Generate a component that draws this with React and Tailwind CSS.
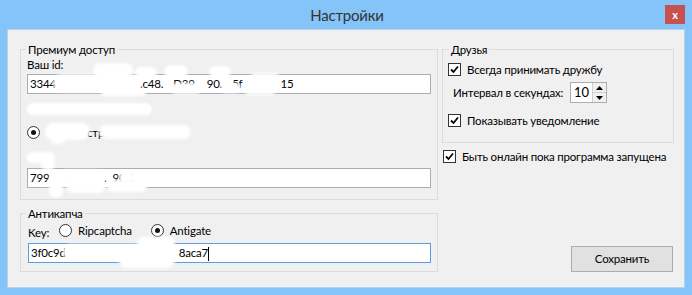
import React from 'react';

const FONT = "font-['Lato',sans-serif]";

// white smudges used to hide private values in the screenshot
const Blob = ({ className }) => (
  <span className={`absolute bg-white rounded-full blur-[1.5px] ${className}`} />
);

const Gap = ({ w }) => <span className="inline-block" style={{ width: w }} />;

const Check = ({ label }) => (
  <div className="flex items-center h-[15px] whitespace-nowrap">
    <span className="w-[13px] h-[13px] border border-[#333] bg-white flex items-center justify-center">
      <svg width="9" height="9" viewBox="0 0 9 9">
        <path d="M1 4.5 L3.5 7 L8 1.5" fill="none" stroke="#000" strokeWidth="1.8" />
      </svg>
    </span>
    <span className="ml-[6px] leading-[15px]">{label}</span>
  </div>
);

const Radio = ({ checked }) => (
  <span className="w-[13px] h-[13px] rounded-full border border-[#333] bg-white flex items-center justify-center">
    {checked && <span className="w-[5px] h-[5px] rounded-full bg-[#111]" />}
  </span>
);

const Group = ({ title, className, legendClass, children }) => (
  <div className={`relative border border-[#dcdcdc] ${className}`}>
    <span className={`absolute -top-[8px] px-[2px] bg-[#f0f0f0] leading-[15px] ${legendClass}`}>
      {title}
    </span>
    {children}
  </div>
);

const TextBox = ({ className, children }) => (
  <div className={`h-[20px] bg-white border px-[2px] leading-[18px] overflow-hidden whitespace-nowrap ${className}`}>
    {children}
  </div>
);

export default function App() {
  return (
    <div className={`w-[692px] h-[295px] bg-[#85c4f9] flex flex-col text-[11.5px] tracking-[-0.2px] text-[#000] ${FONT}`}>
      {/* title bar */}
      <div className="relative h-[29px] flex items-center justify-center">
        <span className="text-[15px] text-[#333] leading-[20px] ml-[2px]">Настройки</span>
        <button className="absolute right-[7px] top-[5px] w-[20px] h-[19px] bg-[#c75050] text-white text-[11px] font-bold leading-[17px] tracking-normal">
          x
        </button>
      </div>

      {/* client area */}
      <div className="mx-[7px] h-[259px] bg-[#f0f0f0] border border-[#b9d1ea] flex pt-[19px] pl-[12px]">
        {/* left column */}
        <div className="w-[418px] flex flex-col gap-[13px]">
          <Group title="Премиум доступ" className="h-[151px]" legendClass="left-[5px]">
            <div className="relative flex flex-col px-[6px]">
              <span className="mt-[7px] leading-[15px]">Ваш id:</span>
              <TextBox className="mt-[2px] border-[#abadb3]">
                3344<Gap w={84} />.c48.<Gap w={10} />D39<Gap w={12} />90.<Gap w={10} />5f<Gap w={38} />15
              </TextBox>
              <span className="mt-[9px] w-[125px] h-[12px] bg-white rounded-full blur-[1px]" />
              <div className="mt-[10px] h-[15px] flex items-center">
                <Radio checked />
                <span className="ml-[5px] leading-[15px] whitespace-nowrap">
                  <Gap w={42} />стр..
                </span>
              </div>
              <span className="mt-[12px] w-[28px] h-[11px] bg-white rounded-full blur-[1px]" />
              <TextBox className="mt-[5px] border-[#abadb3]">
                799<Gap w={18} />0<Gap w={30} />.<Gap w={6} />90C
              </TextBox>

              {/* smudges over the id box */}
              <Blob className="left-[32px] top-[24px] w-[85px] h-[18px]" />
              <Blob className="left-[72px] top-[13px] w-[40px] h-[14px]" />
              <Blob className="left-[80px] top-[38px] w-[45px] h-[8px]" />
              <Blob className="left-[114px] top-[17px] w-[22px] h-[11px]" />
              <Blob className="left-[143px] top-[15px] w-[24px] h-[13px]" />
              <Blob className="left-[150px] top-[33px] w-[30px] h-[11px]" />
              <Blob className="left-[188px] top-[16px] w-[22px] h-[12px]" />
              <Blob className="left-[200px] top-[33px] w-[20px] h-[10px]" />
              <Blob className="left-[222px] top-[32px] w-[34px] h-[13px]" />
              <Blob className="left-[228px] top-[23px] w-[32px] h-[14px]" />
              {/* smudges over the radio label */}
              <Blob className="left-[24px] top-[73px] w-[45px] h-[17px]" />
              <Blob className="left-[30px] top-[84px] w-[14px] h-[10px]" />
              <Blob className="left-[78px] top-[75px] w-[92px] h-[14px]" />
              {/* smudges over the second box */}
              <Blob className="left-[20px] top-[108px] w-[14px] h-[12px]" />
              <Blob className="left-[28px] top-[122px] w-[14px] h-[26px]" />
              <Blob className="left-[40px] top-[120px] w-[40px] h-[12px]" />
              <Blob className="left-[45px] top-[128px] w-[40px] h-[15px]" />
              <Blob className="left-[86px] top-[130px] w-[40px] h-[12px]" />
              <Blob className="left-[98px] top-[121px] w-[16px] h-[12px]" />
            </div>
          </Group>

          <Group title="Антикапча" className="h-[59px]" legendClass="left-[5px]">
            <div className="relative flex flex-col pl-[7px] pr-[6px]">
              <div className="mt-[9px] h-[15px] flex items-center">
                <span className="mt-[3px] leading-[15px]">Key:</span>
                <span className="ml-[10px]"><Radio /></span>
                <span className="ml-[6px] leading-[15px]">Ripcaptcha</span>
                <span className="ml-[19px]"><Radio checked /></span>
                <span className="ml-[6px] leading-[15px]">Antigate</span>
              </div>
              <TextBox className="mt-[5px] border-[#569de5]">
                3f0c9d<Gap w={113} />8aca7
                <span className="inline-block w-px h-[14px] bg-black align-middle" />
              </TextBox>
              <Blob className="left-[42px] top-[30px] w-[106px] h-[16px]" />
              <Blob className="left-[98px] top-[38px] w-[56px] h-[16px]" />
              <Blob className="left-[116px] top-[23px] w-[38px] h-[12px]" />
            </div>
          </Group>
        </div>

        {/* right column */}
        <div className="ml-[4px] w-[232px] flex flex-col">
          <Group title="Друзья" className="h-[94px]" legendClass="left-[6px]">
            <div className="flex flex-col">
              <div className="mt-[12px] pl-[5px]">
                <Check label="Всегда принимать дружбу" />
              </div>
              <div className="mt-[5px] pl-[10px] h-[21px] flex items-center">
                <span className="w-[117px] leading-[15px] whitespace-nowrap">Интервал в секундах:</span>
                <div className="w-[37px] h-[21px] border border-[#abadb3] bg-white flex">
                  <span className="flex-1 pl-[3px] leading-[19px] text-[13px] tracking-normal">10</span>
                  <div className="w-[14px] flex flex-col border-l border-[#cfcfcf]">
                    <span className="flex-1 flex items-center justify-center bg-[#f0f0f0] border-b border-[#cfcfcf]">
                      <svg width="7" height="4" viewBox="0 0 7 4"><path d="M0 4 L3.5 0 L7 4 Z" fill="#000" /></svg>
                    </span>
                    <span className="flex-1 flex items-center justify-center bg-[#f0f0f0]">
                      <svg width="7" height="4" viewBox="0 0 7 4"><path d="M0 0 L3.5 4 L7 0 Z" fill="#000" /></svg>
                    </span>
                  </div>
                </div>
              </div>
              <div className="mt-[10px] pl-[5px]">
                <Check label="Показывать уведомление" />
              </div>
            </div>
          </Group>
          <div className="mt-[6px] pl-[1px]">
            <Check label="Быть онлайн пока программа запущена" />
          </div>
          <button className="mt-[82px] self-end mr-[1px] w-[102px] h-[26px] bg-[#e1e1e1] border border-[#adadad] leading-[24px]">
            Сохранить
          </button>
        </div>
      </div>
    </div>
  );
}
